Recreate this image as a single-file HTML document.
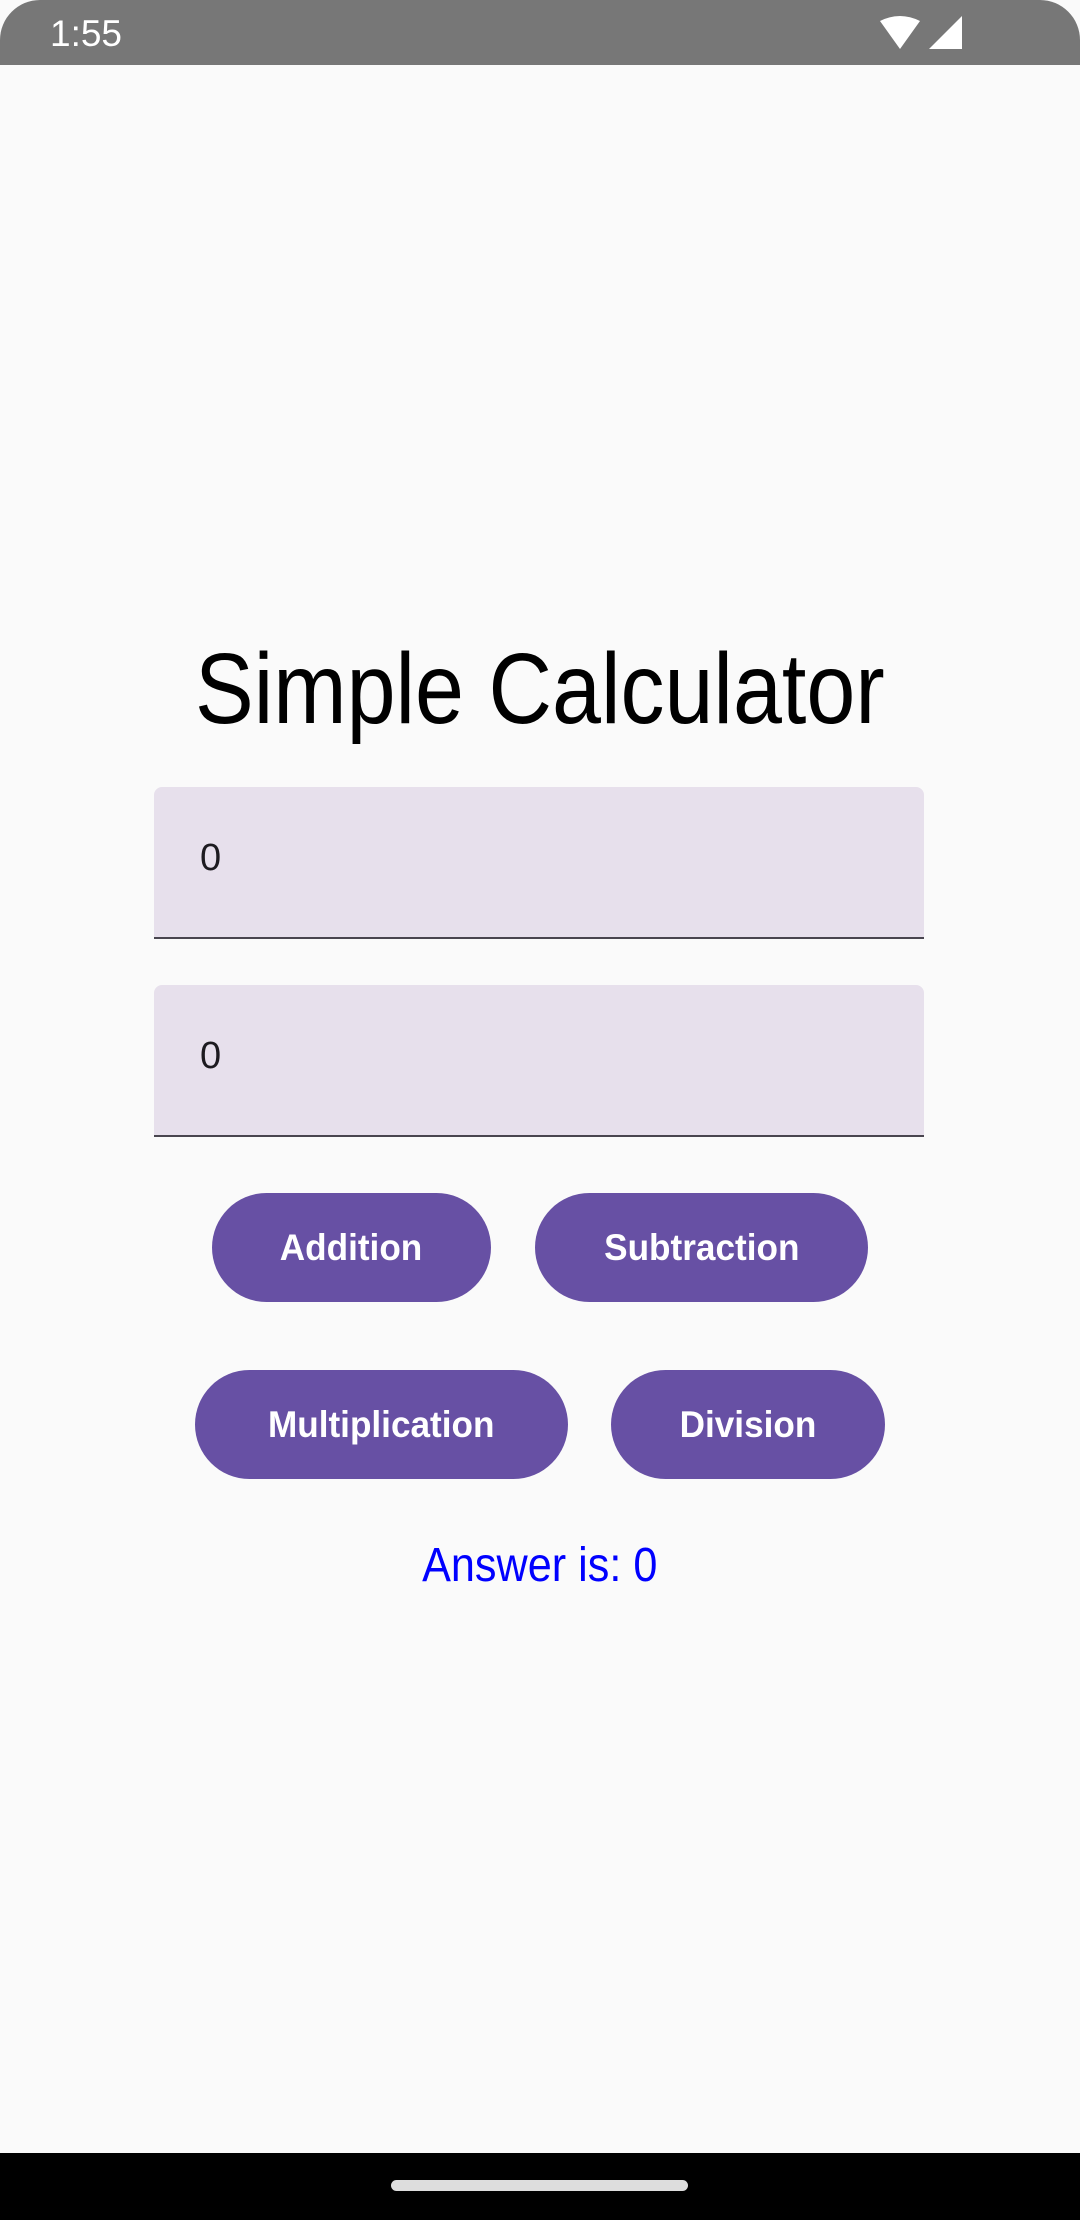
<!DOCTYPE html>
<html><head><meta charset="utf-8"><style>
*{margin:0;padding:0;box-sizing:border-box}
body{width:1080px;height:2220px;background:#fafafa;position:relative;overflow:hidden;font-family:"Liberation Sans",sans-serif}
.sb{position:absolute;left:0;top:0;width:1080px;height:65px;background:#777;border-radius:40px 40px 0 0}
.time{position:absolute;left:50px;top:13px;color:#fff;font-size:37px}
.title{position:absolute;left:0;width:1080px;top:634px;text-align:center;font-size:100px;line-height:110px;color:#000}
.title span{display:inline-block;transform:scaleX(.88)}
.field{position:absolute;left:154px;width:770px;height:152px;background:#e7e0ec;border-radius:8px 8px 0 0;border-bottom:2px solid #49454f}
.field span{position:absolute;left:46px;top:50px;font-size:38px;color:#1d1b20}
.btn{position:absolute;height:109px;background:#6750a4;border-radius:55px;color:#fff;font-weight:bold;font-size:37px;display:flex;align-items:center;justify-content:center}
.btn span{display:inline-block;transform:scaleX(.95)}
.ans{position:absolute;left:0;width:1080px;top:1538px;text-align:center;color:#0000ff;font-size:48px;line-height:56px}
.ans span{display:inline-block;transform:scaleX(.9)}
.nav{position:absolute;left:0;top:2153px;width:1080px;height:67px;background:#000}
.handle{position:absolute;left:391px;top:2180px;width:297px;height:11px;border-radius:6px;background:#ddd}
</style></head><body>
<div class="sb"><div class="time">1:55</div>
<svg style="position:absolute;left:880px;top:15px" width="82" height="36" viewBox="0 0 82 36">
<path d="M0 6 Q20 -4 40 6 L20 34 Z" fill="#fff"/>
<path d="M82 1 L82 34 L49 34 Z" fill="#fff"/>
</svg></div>
<div class="title"><span>Simple Calculator</span></div>
<div class="field" style="top:787px"><span>0</span></div>
<div class="field" style="top:985px"><span>0</span></div>
<div class="btn" style="left:212px;top:1193px;width:279px"><span>Addition</span></div>
<div class="btn" style="left:535px;top:1193px;width:333px"><span>Subtraction</span></div>
<div class="btn" style="left:195px;top:1370px;width:373px"><span>Multiplication</span></div>
<div class="btn" style="left:611px;top:1370px;width:274px"><span>Division</span></div>
<div class="ans"><span>Answer is: 0</span></div>
<div class="nav"></div><div class="handle"></div>
</body></html>
